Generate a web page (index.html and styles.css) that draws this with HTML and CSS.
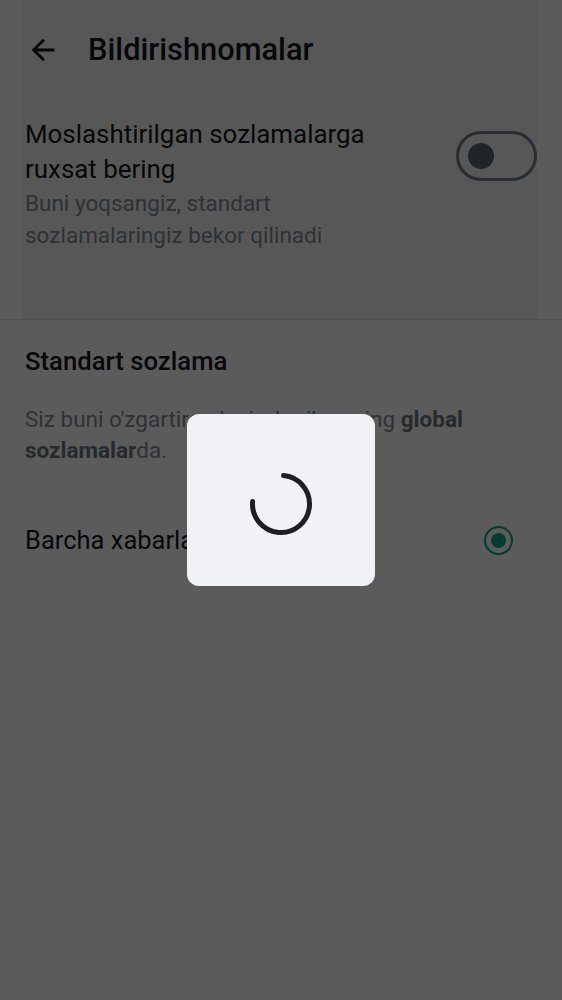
FILE: index.html
```html
<!DOCTYPE html>
<html lang="uz">
<head>
<meta charset="utf-8">
<title>Bildirishnomalar</title>
<link rel="stylesheet" href="styles.css">
</head>
<body>
<div class="page">
  <section class="top">
    <div class="card">
      <header class="appbar">
        <svg class="back" viewBox="0 0 24 24" aria-hidden="true"><path d="M20 11H7.83l5.59-5.59L12 4l-8 8 8 8 1.41-1.41L7.83 13H20v-2z"/></svg>
        <h1 class="appbar-title">Bildirishnomalar</h1>
      </header>
      <div class="setting-row">
        <div class="setting-text">
          <div class="setting-title">Moslashtirilgan sozlamalarga ruxsat bering</div>
          <div class="setting-sub">Buni yoqsangiz, standart sozlamalaringiz bekor qilinadi</div>
        </div>
        <span class="switch"><span class="knob"></span></span>
      </div>
    </div>
  </section>
  <section class="defaults">
    <h2 class="section-title">Standart sozlama</h2>
    <p class="section-text">Siz buni o'zgartira olasiz, bu ilovaning <b>global</b> <b>sozlamalar</b>da.</p>
    <div class="radio-row">
      <span class="radio-label">Barcha xabarlar</span>
      <span class="radio"><span class="radio-dot"></span></span>
    </div>
  </section>
</div>
<div class="scrim"></div>
<div class="dialog-layer">
  <div class="dialog">
    <svg class="spinner" viewBox="0 0 64 64" aria-hidden="true"><path d="M34.48 3.61 A28.5 28.5 0 1 1 3.61 29.52"/></svg>
  </div>
</div>
</body>
</html>
```
FILE: styles.css
```css
* { box-sizing: border-box; }
html, body { margin: 0; padding: 0; }
body {
  font-family: Roboto, "Noto Sans", "Liberation Sans", sans-serif;
  background: #ffffff;
  color: #1f2326;
}
.page {
  min-height: 1000px;
  background: #ffffff;
}
.top {
  border-bottom: 1px solid #e4e4e4;
}
.card {
  margin: 0 25px 0 23px;
  background: #f4f4f4;
  padding-bottom: 68px;
}
.appbar {
  height: 100px;
  display: flex;
  align-items: center;
  padding-left: 3px;
}
.back {
  width: 34px;
  height: 34px;
  fill: #111315;
  flex: none;
}
.appbar-title {
  margin: 0 0 0 28px;
  font-size: 30.8px;
  font-weight: 500;
  line-height: 1;
  color: #15181a;
}
.setting-row {
  display: flex;
  justify-content: space-between;
  align-items: flex-start;
  padding: 17px 0 0 2px;
}
.setting-text {
  width: 390px;
}
.setting-title {
  font-size: 25.9px;
  line-height: 35px;
  color: #15181a;
}
.setting-sub {
  font-size: 22.5px;
  line-height: 32px;
  color: #858b93;
}
.switch {
  margin-top: 14px;
  width: 81px;
  height: 50px;
  border: 3px solid #737e8b;
  border-radius: 25px;
  display: flex;
  align-items: center;
  padding-left: 9px;
  flex: none;
}
.knob {
  width: 26px;
  height: 26px;
  border-radius: 50%;
  background: #5e6772;
}
.defaults {
  padding: 25px 25px 0 25px;
}
.section-title {
  margin: 0;
  font-size: 25.7px;
  font-weight: 500;
  line-height: 32px;
  color: #15181a;
}
.section-text {
  margin: 27px 0 0 0;
  font-size: 22.5px;
  line-height: 31px;
  color: #858b93;
}
.section-text b {
  font-weight: 700;
  color: #6f757d;
}
.radio-row {
  margin-top: 58px;
  display: flex;
  justify-content: space-between;
  align-items: center;
}
.radio-label {
  font-size: 25.5px;
  line-height: 32px;
  color: #15181a;
}
.radio {
  width: 29px;
  height: 29px;
  margin-right: 24px;
  border: 2.5px solid #00a884;
  border-radius: 50%;
  display: flex;
  align-items: center;
  justify-content: center;
}
.radio-dot {
  width: 15px;
  height: 15px;
  border-radius: 50%;
  background: #00a884;
}
.scrim {
  position: fixed;
  inset: 0;
  background: rgba(0, 0, 0, 0.645);
}
.dialog-layer {
  position: fixed;
  inset: 0;
  display: flex;
  align-items: center;
  justify-content: center;
}
.dialog {
  width: 188px;
  height: 172px;
  background: #f0f2f5;
  border-radius: 12px;
  display: flex;
  align-items: center;
  justify-content: center;
  padding-top: 8px;
}
.spinner {
  width: 64px;
  height: 64px;
  fill: none;
  stroke: #1d1f23;
  stroke-width: 5;
  stroke-linecap: round;
}
```
